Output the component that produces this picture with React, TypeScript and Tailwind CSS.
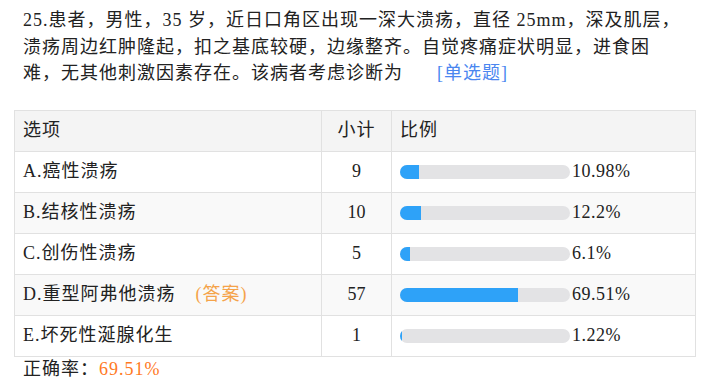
import React from "react";

const rows = [
  { label: "A.癌性溃疡", count: 9, pct: 10.98, text: "10.98%", answer: false },
  { label: "B.结核性溃疡", count: 10, pct: 12.2, text: "12.2%", answer: false },
  { label: "C.创伤性溃疡", count: 5, pct: 6.1, text: "6.1%", answer: false },
  { label: "D.重型阿弗他溃疡", count: 57, pct: 69.51, text: "69.51%", answer: true },
  { label: "E.坏死性涎腺化生", count: 1, pct: 1.22, text: "1.22%", answer: false },
];

export default function App() {
  return (
    <div
      className="w-[711px] h-[387px] bg-white text-[#222] text-[18px] overflow-hidden"
      style={{ fontFamily: '"Liberation Serif", "Noto Sans CJK SC", serif' }}
    >
      <div className="pl-[23px] pt-[7px] leading-[26.5px] tracking-[1px]">
        25.患者，男性，35 岁，近日口角区出现一深大溃疡，直径 25mm，深及肌层，
        <br />
        溃疡周边红肿隆起，扣之基底较硬，边缘整齐。自觉疼痛症状明显，进食困
        <br />
        难，无其他刺激因素存在。该病者考虑诊断为
        <span className="ml-[34px] text-[#4a86f0]">[单选题]</span>
      </div>
      <div className="pl-[14px] pt-[23px]">
        <table className="border-collapse w-[681px] table-fixed">
          <colgroup>
            <col className="w-[307px]" />
            <col className="w-[70px]" />
            <col className="w-[304px]" />
          </colgroup>
          <thead>
            <tr className="h-[41px] bg-[#f4f4f4]">
              <th className="border border-[#e1e1e1] text-left font-normal pl-[8px] tracking-[1px]">选项</th>
              <th className="border border-[#e1e1e1] text-center font-normal tracking-[1px]">小计</th>
              <th className="border border-[#e1e1e1] text-left font-normal pl-[8px] tracking-[1px]">比例</th>
            </tr>
          </thead>
          <tbody>
            {rows.map((r, i) => (
              <tr key={r.label} className={i % 2 === 1 ? "h-[41px] bg-[#f9f9f9]" : "h-[41px] bg-white"}>
                <td className="border border-[#e1e1e1] pl-[8px] tracking-[1px]">
                  {r.label}
                  {r.answer && <span className="ml-[20px] text-[#f5a34a]">(答案)</span>}
                </td>
                <td className="border border-[#e1e1e1] text-center">{r.count}</td>
                <td className="border border-[#e1e1e1] pl-[8px]">
                  <div className="flex items-center">
                    <div className="w-[170px] h-[14px] rounded-full bg-[#e3e3e5] overflow-hidden">
                      <div className="h-full bg-[#2ea2f8]" style={{ width: `${r.pct}%` }} />
                    </div>
                    <span className="ml-[2px] tracking-[0.5px]">{r.text}</span>
                  </div>
                </td>
              </tr>
            ))}
          </tbody>
        </table>
      </div>
      <div className="pl-[23px] leading-[24px] tracking-[1px]">
        正确率：<span className="text-[#ff7a1f]">69.51%</span>
      </div>
    </div>
  );
}
